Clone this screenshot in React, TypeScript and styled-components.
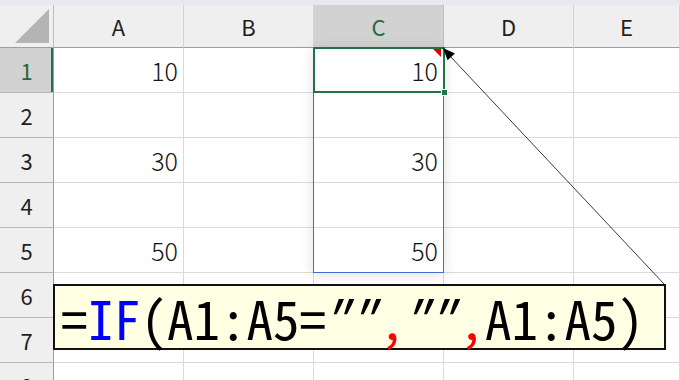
import React from "react";
import styled, { createGlobalStyle, css } from "styled-components";

const GlobalStyle = createGlobalStyle`
  html, body {
    margin: 0;
    padding: 0;
    background: #ffffff;
    overflow: hidden;
  }
  body {
    font-family: "Noto Sans CJK JP", "Noto Sans", sans-serif;
  }
`;

const COLS = ["A", "B", "C", "D", "E"];
const ROWS = [1, 2, 3, 4, 5, 6, 7, 8];
const VALUES: Record<string, string> = {
  A1: "10",
  A3: "30",
  A5: "50",
  C1: "10",
  C3: "30",
  C5: "50",
};

const Sheet = styled.div`
  position: relative;
  width: 680px;
  height: 380px;
  overflow: hidden;
`;

const TopStrip = styled.div`
  height: 5px;
  background: #e6e9ed;
`;

const Grid = styled.div`
  display: grid;
  grid-template-columns: 54px 130px 130px 130px 130px 1fr;
  grid-template-rows: 43px;
  grid-auto-rows: 45px;
`;

const Corner = styled.div`
  background: #efefef;
  border-right: 1px solid #bdbdbd;
  border-bottom: 1px solid #9e9e9e;
  box-sizing: border-box;
  display: flex;
  align-items: flex-end;
  justify-content: flex-end;
  padding: 0 3px 3px 0;
`;

const ColHead = styled.div<{ $active?: boolean }>`
  box-sizing: border-box;
  display: flex;
  align-items: center;
  justify-content: center;
  font-size: 22px;
  color: #1f1f1f;
  background: #efefef;
  border-right: 1px solid #d4d4d4;
  border-bottom: 1px solid #9e9e9e;
  ${(p) =>
    p.$active &&
    css`
      background: #d2d2d2;
      color: #1e6b41;
      border-right-color: #bdbdbd;
    `}
`;

const RowHead = styled.div<{ $active?: boolean }>`
  box-sizing: border-box;
  display: flex;
  align-items: center;
  justify-content: center;
  font-size: 22px;
  color: #1f1f1f;
  background: #efefef;
  border-right: 1px solid #9e9e9e;
  border-bottom: 1px solid #b8b8b8;
  ${(p) =>
    p.$active &&
    css`
      background: #d2d2d2;
      color: #1e6b41;
      box-shadow: inset -2px 0 0 #217346;
    `}
`;

const Cell = styled.div`
  box-sizing: border-box;
  display: flex;
  align-items: center;
  justify-content: flex-end;
  padding-right: 5px;
  font-size: 25px;
  font-weight: 300;
  color: #141414;
  background: #ffffff;
  border-right: 1px solid #dadada;
  border-bottom: 1px solid #dadada;
`;

/* overlays drawn over the grid: spill range, active cell, note arrow, callout */
const SpillRange = styled.div`
  position: absolute;
  left: 313px;
  top: 47px;
  width: 131px;
  height: 226px;
  box-sizing: border-box;
  border: 1px solid #3f6fd0;
  box-shadow: 0 2px 12px rgba(0, 0, 0, 0.13);
`;

const Selection = styled.div`
  position: absolute;
  left: 313px;
  top: 47px;
  width: 132px;
  height: 46px;
  box-sizing: border-box;
  border: 2px solid #217346;
`;

const FillHandle = styled.div`
  position: absolute;
  right: -5px;
  bottom: -5px;
  width: 5px;
  height: 5px;
  background: #217346;
  border: 1px solid #ffffff;
`;

const CommentMark = styled.div`
  position: absolute;
  right: 2px;
  top: 0;
  width: 0;
  height: 0;
  border-top: 8px solid #e00000;
  border-left: 8px solid transparent;
`;

const Callout = styled.div`
  position: absolute;
  left: 53px;
  top: 284px;
  width: 613px;
  height: 66px;
  box-sizing: border-box;
  border: 2px solid #111111;
  background: #ffffe3;
  display: flex;
  align-items: center;
  padding-left: 6px;
  font-family: "Noto Sans Mono CJK JP", "Liberation Mono", monospace;
  font-size: 53px;
  color: #000000;
  white-space: nowrap;
`;

const Fn = styled.span`
  color: #0000ff;
`;

const Sep = styled.span`
  color: #ff0000;
`;

const Quote = styled.span`
  display: inline-block;
  transform: skewX(-22deg);
`;

const Arrow = styled.svg`
  position: absolute;
  left: 0;
  top: 0;
  pointer-events: none;
`;

export default function App() {
  return (
    <>
      <GlobalStyle />
      <Sheet>
        <TopStrip />
        <Grid>
          <Corner>
            <svg width="36" height="36" viewBox="0 0 36 36">
              <polygon points="35,1 35,35 1,35" fill="#b4b4b4" />
            </svg>
          </Corner>
          {COLS.map((c) => (
            <ColHead key={c} $active={c === "C"}>
              {c}
            </ColHead>
          ))}
          {ROWS.map((r) => (
            <React.Fragment key={r}>
              <RowHead $active={r === 1}>{r}</RowHead>
              {COLS.map((c) => (
                <Cell key={c + r}>{VALUES[c + r] ?? ""}</Cell>
              ))}
            </React.Fragment>
          ))}
        </Grid>

        <SpillRange />
        <Selection>
          <CommentMark />
          <FillHandle />
        </Selection>

        <Arrow width="680" height="380" viewBox="0 0 680 380">
          <line x1="665" y1="285" x2="449" y2="55" stroke="#3a3a3a" strokeWidth="1" />
          <polygon points="443,48 447.6,60.2 454.9,53.4" fill="#000000" />
        </Arrow>

        <Callout>
          =<Fn>IF</Fn>(A1:A5=<Quote>"</Quote>
          <Quote>"</Quote>
          <Sep>,</Sep>
          <Quote>"</Quote>
          <Quote>"</Quote>
          <Sep>,</Sep>A1:A5)
        </Callout>
      </Sheet>
    </>
  );
}
